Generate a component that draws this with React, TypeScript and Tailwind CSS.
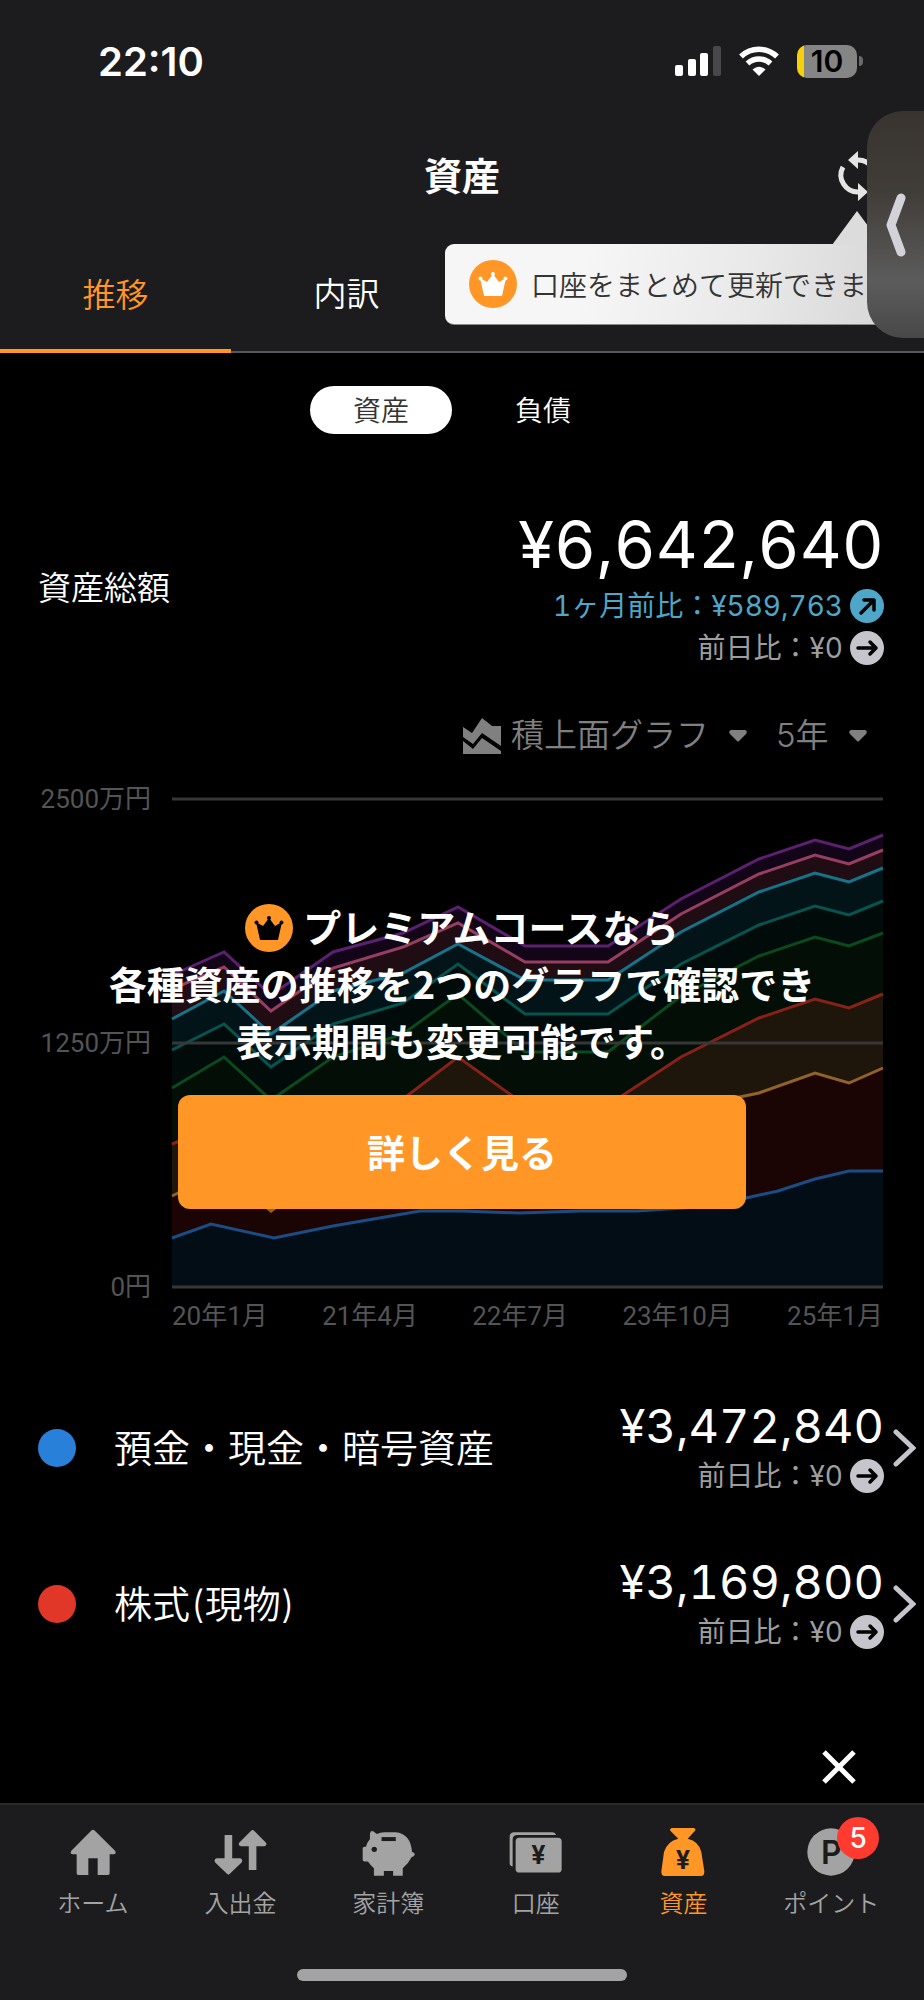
import type { ReactNode } from "react";

const PLOT_WIDTH = 711;
const PLOT_HEIGHT = 488;

const XS = [0, 52, 99, 161, 231, 286, 353, 436, 509, 587, 643, 677, 711];

type Series = { name: string; line: string; fill: string; xs: number[]; ys: number[] };

// drawn back to front, each area covers the one above it down to the baseline
const SERIES: Series[] = [
  { name: "purple", line: "#5c2070", fill: "#110517", xs: XS, ys: [176, 153, 196, 153, 134, 108, 147, 147, 100, 60, 41, 50, 36] },
  { name: "pink", line: "#963f60", fill: "#1f0d13", xs: XS, ys: [190, 168, 212, 169, 148, 124, 163, 163, 115, 75, 56, 65, 51] },
  { name: "cyan", line: "#16748a", fill: "#031419", xs: XS, ys: [220, 192, 235, 192, 174, 145, 181, 181, 133, 93, 74, 83, 69] },
  { name: "teal", line: "#06544d", fill: "#010b09", xs: XS, ys: [251, 225, 268, 225, 204, 165, 215, 215, 165, 126, 107, 116, 102] },
  { name: "green", line: "#0a4a1f", fill: "#030f06", xs: XS, ys: [289, 258, 301, 258, 235, 195, 253, 253, 197, 157, 138, 147, 134] },
  { name: "red", line: "#882218", fill: "#1e150b", xs: XS, ys: [345, 325, 360, 330, 300, 258, 306, 306, 258, 219, 200, 209, 195] },
  { name: "gold", line: "#926328", fill: "#1a0504", xs: XS, ys: [397, 372, 412, 365, 350, 330, 340, 340, 310, 294, 274, 284, 269] },
  {
    name: "blue",
    line: "#1a4d85",
    fill: "#030d16",
    xs: [0, 39, 102, 161, 248, 290, 347, 408, 465, 540, 574, 606, 643, 677, 711],
    ys: [439, 425, 439, 427, 412, 412, 414, 412, 412, 407, 399, 392, 380, 372, 372],
  },
];

const Y_LABELS = ["2500万円", "1250万円", "0円"];
const X_LABELS = ["20年1月", "21年4月", "22年7月", "23年10月", "25年1月"];

const ACCOUNTS = [
  { name: "預金・現金・暗号資産", amount: "¥3,472,840", diff: "¥0", dot: "bg-[#2980d9]" },
  { name: "株式(現物)", amount: "¥3,169,800", diff: "¥0", dot: "bg-[#e03728]" },
];

function Crown({ className }: { className: string }) {
  return (
    <svg viewBox="0 0 48 48" className="size-12 shrink-0" aria-hidden="true">
      <circle cx="24" cy="24" r="24" fill="#ff9626" />
      <g className={className}>
        <path d="M11 18l7 4 6-8 6 8 7-4-4 18H15z" />
        <circle cx="24" cy="14" r="2" />
        <circle cx="11.500" cy="18.500" r="2" />
        <circle cx="36.500" cy="18.500" r="2" />
      </g>
    </svg>
  );
}

function TrendIcon({ up = false }: { up?: boolean }) {
  return (
    <svg viewBox="0 0 34 34" className="size-[34px] shrink-0" aria-hidden="true">
      <circle cx="17" cy="17" r="17" fill={up ? "#4ea7c8" : "#c6c5cb"} />
      <g fill="none" stroke="#000" strokeWidth="3.500" strokeLinecap="round" strokeLinejoin="round">
        {up ? <path d="M11 24L24 11M14 11h10v10" /> : <path d="M8 17h18M20 11l6 6-6 6" />}
      </g>
    </svg>
  );
}

function Caret() {
  return (
    <svg viewBox="0 0 18 12" className="h-3 w-[18px]" aria-hidden="true">
      <path d="M2 0h14q3 1 1 4l-7 7q-1 1-2 0L1 4Q-1 1 2 0z" fill="#808080" />
    </svg>
  );
}

function StatusBar() {
  return (
    <div className="flex h-[122px] items-center justify-between pl-[98px] pr-[61px]">
      <span className="pt-[2px] text-[40px] font-semibold leading-none">22:10</span>
      <div className="flex items-center gap-[18px]">
        <svg viewBox="0 0 46 30" className="h-[30px] w-[46px]" fill="#fff" aria-hidden="true">
          <rect x="0" y="19" width="8" height="11" rx="2" />
          <rect x="13" y="13" width="8" height="17" rx="2" />
          <rect x="25" y="7" width="8" height="23" rx="2" />
          <rect x="38" y="0" width="8" height="30" rx="2" fill="#48484a" />
        </svg>
        <svg viewBox="0 0 40 30" className="h-[30px] w-10" aria-hidden="true">
          <g fill="none" stroke="#fff" strokeWidth="5.500">
            <path d="M2 10.500a26 26 0 0 1 36 0" />
            <path d="M8.500 17.500a17 17 0 0 1 23 0" />
          </g>
          <path d="M20 30l-6.500-6.500q6.500-5.500 13 0z" fill="#fff" />
        </svg>
        <div className="flex items-center gap-[2px]">
          <div className="flex h-[33px] w-[60px] items-center justify-center rounded-[10px] bg-[linear-gradient(90deg,#f5d00b_7px,#858585_7px)]">
            <span className="text-[30px] font-semibold leading-none text-black">10</span>
          </div>
          <span className="h-[10px] w-1 rounded-r-full bg-[#6a6a6a]" />
        </div>
      </div>
    </div>
  );
}

function UpdateTooltip() {
  return (
    <div className="absolute left-[445px] right-[12px] top-[244px] flex h-[81px] items-center gap-[14px] rounded-[9px] border-b border-[#8a8a8a] bg-[linear-gradient(100deg,#f6f6f6_30%,#e9e9e9_65%,#d4d4d4)] pl-6">
      <svg viewBox="0 0 50 34" className="absolute -top-[33px] right-[30px] h-[34px] w-[50px]" aria-hidden="true">
        <path d="M25 0l25 34H0z" fill="#dcdcdc" />
      </svg>
      <Crown className="fill-white" />
      <p className="whitespace-nowrap pt-1 text-[28px] font-[350] text-[#333]">口座をまとめて更新できます</p>
    </div>
  );
}

function Header() {
  return (
    <header className="relative bg-[#1c1c1e]">
      <StatusBar />
      <div className="flex h-[108px] items-center justify-center">
        <h1 className="text-[38px] font-bold leading-[54px]">資産</h1>
        <button type="button" aria-label="更新" className="absolute right-[39px]">
          <svg viewBox="0 0 54 54" className="size-[54px]" aria-hidden="true">
            <g fill="none" stroke="#e4e4e4" strokeWidth="5">
              <path d="M12 18a17 17 0 0 0 16 25" />
              <path d="M42 36a17 17 0 0 0-16-25" />
            </g>
            <path d="M27 34v18l10-9zM27 20V2l-10 9z" fill="#e4e4e4" />
          </svg>
        </button>
      </div>
      <nav className="grid h-[123px] grid-cols-4 border-b-2 border-[#57565b] text-[33px] font-[350]">
        <button type="button" className="-mb-[2px] border-b-4 border-[#ff9626] pt-3 text-[#ff9626]">推移</button>
        <button type="button" className="pt-2">内訳</button>
      </nav>
      <UpdateTooltip />
      <button
        type="button"
        aria-label="戻る"
        className="absolute right-0 top-[111px] flex h-[227px] w-[57px] items-center justify-center rounded-l-[36px] bg-[linear-gradient(#39342f,#403c38_35%,#5c5c5c_75%,#484848)]"
      >
        <svg viewBox="0 0 22 66" className="h-[66px] w-[22px]" aria-hidden="true">
          <path d="M16 6L6 33l10 27" fill="none" stroke="#d3d2d9" strokeWidth="9" strokeLinecap="round" strokeLinejoin="round" />
        </svg>
      </button>
    </header>
  );
}

function Summary() {
  return (
    <section className="mt-[71px] flex items-center justify-between pl-[38px] pr-10">
      <h2 className="pt-1 text-[33px] font-[350]">資産総額</h2>
      <div className="flex flex-col items-end tabular-nums">
        <p className="text-[65px] leading-[80px]">¥6,642,640</p>
        <p className="flex h-[42px] items-center gap-[7px] text-[28px] text-[#4ea7c8]">
          1ヶ月前比：¥589,763
          <TrendIcon up />
        </p>
        <p className="flex h-[42px] items-center gap-[7px] text-[28px] text-[#9e9e9e]">
          前日比：¥0
          <TrendIcon />
        </p>
      </div>
    </section>
  );
}

function ChartControls() {
  return (
    <div className="mt-[43px] flex h-12 items-center justify-end pr-[57px] text-[33px] font-[350] text-[#808080]">
      <svg viewBox="0 0 38 36" className="mr-[10px] h-9 w-[38px]" fill="#808080" aria-hidden="true">
        <path d="M0 9l9 6L19 0l10 8h9v20L19 15l-9 11L0 19z" />
        <path d="M0 23l10 8 9-11 19 13v3H0z" />
      </svg>
      <label className="flex items-center gap-[20px]">
        <select aria-label="グラフの種類" className="appearance-none">
          <option>積上面グラフ</option>
        </select>
        <Caret />
      </label>
      <label className="ml-[29px] flex items-center gap-[20px]">
        <select aria-label="表示期間" className="appearance-none">
          <option>5年</option>
        </select>
        <Caret />
      </label>
    </div>
  );
}

function AssetChart() {
  return (
    <section className="relative mt-[26px] pr-[41px] font-['Roboto','Noto_Sans_CJK_JP',sans-serif] text-[26px] text-[#545454]">
      <div className="flex">
        <div className="flex w-[172px] shrink-0 flex-col items-end justify-between pr-[21px] leading-[26px]">
          {Y_LABELS.map((label) => (
            <span key={label}>{label}</span>
          ))}
        </div>
        <div className="flex-1 py-[13px]">
          <svg viewBox={`0 0 ${PLOT_WIDTH} ${PLOT_HEIGHT}`} className="block w-full overflow-visible" role="img" aria-label="資産推移">
            {SERIES.map((s) => {
              const points = s.xs.map((x, i) => `${x},${s.ys[i]}`).join(" ");
              return (
                <g key={s.name}>
                  <polygon points={`${points} ${PLOT_WIDTH},${PLOT_HEIGHT} 0,${PLOT_HEIGHT}`} fill={s.fill} />
                  <polyline points={points} fill="none" stroke={s.line} strokeWidth="3" />
                </g>
              );
            })}
            <path d="M0 0H711M0 244H711M0 488H711" stroke="#373737" strokeWidth="3" />
          </svg>
        </div>
      </div>
      <div className="flex h-8 items-center justify-between pl-[172px]">
        {X_LABELS.map((label) => (
          <span key={label}>{label}</span>
        ))}
      </div>

      {/* Premium upsell over the sample chart */}
      <div className="absolute inset-0 flex flex-col items-center pt-[111px] font-['Noto_Sans_CJK_JP',sans-serif] text-[38px] font-bold leading-[57px] text-white">
        <div className="flex gap-[10px]">
          <div className="pt-[7px]">
            <Crown className="fill-black" />
          </div>
          <p>プレミアムコースなら</p>
        </div>
        <p>各種資産の推移を2つのグラフで確認でき</p>
        <p>表示期間も変更可能です。</p>
        <button type="button" className="mt-[27px] h-[114px] w-[568px] rounded-xl bg-[#ff9626] pb-1">
          詳しく見る
        </button>
      </div>
    </section>
  );
}

function AccountList() {
  return (
    <ul className="mt-[38px] tabular-nums">
      {ACCOUNTS.map((account) => (
        <li key={account.name}>
          <a href="#" className="flex h-[156px] items-center pl-[38px] pr-2">
            <span className={`size-[38px] rounded-full ${account.dot}`} />
            <span className="ml-[38px] flex-1 text-[38px] font-[350]">{account.name}</span>
            <span className="flex flex-col items-end">
              <span className="text-[47px] leading-[56px]">{account.amount}</span>
              <span className="flex h-11 items-center gap-[7px] text-[28px] text-[#9e9e9e]">
                前日比：{account.diff}
                <TrendIcon />
              </span>
            </span>
            <svg viewBox="0 0 24 40" className="ml-2 h-10 w-6" aria-hidden="true">
              <path d="M4 4l17 16L4 36" fill="none" stroke="#c6c5cb" strokeWidth="5" strokeLinecap="round" />
            </svg>
          </a>
        </li>
      ))}
    </ul>
  );
}

function NavItem({ label, active = false, children }: { label: string; active?: boolean; children: ReactNode }) {
  return (
    <a href="#" className={`flex flex-col items-center gap-[10px] ${active ? "text-[#ff9626]" : "text-[#a3a3a3]"}`}>
      <span className="relative h-12">{children}</span>
      <span className="text-2xl font-[350] leading-9">{label}</span>
    </a>
  );
}

function BottomNav() {
  return (
    <footer className="mt-auto border-t-2 border-[#29292a] bg-[#1c1c1e]">
      <nav className="grid grid-cols-6 px-[19px] pt-[23px]">
        <NavItem label="ホーム">
          <svg viewBox="205 324 144 144" className="size-12 fill-current" aria-hidden="true">
            <path d="M273 331q4-4 8 0l62 61q6 10-5 11h-11v57q0 5-5 5h-31v-50h-28v50h-30q-5 0-5-5v-57h-11q-11-1-5-11z" />
          </svg>
        </NavItem>
        <NavItem label="入出金">
          <svg viewBox="640 324 160 144" className="h-12 w-[53px] fill-current" aria-hidden="true">
            <path d="M672 345h23v70h24q9 2 5 12l-36 35q-4 5-9 0l-36-35q-4-10 5-12h24z" />
            <path d="M745 450h23v-71h24q9-2 5-11l-36-36q-4-5-9 0l-36 36q-4 9 5 11h24z" />
          </svg>
        </NavItem>
        <NavItem label="家計簿">
          <svg viewBox="1083 324 160 144" className="h-12 w-[53px] fill-current" aria-hidden="true">
            <path d="M1107 340q2-10 11-6l10 8q10-6 22-6h34q46 4 50 60 9 2 8 8-1 6-9 7-9 19-27 34v23h-29v-15h-28v15h-30v-23q-11-9-18-20h-10q-6 0-6-6v-34q0-5 6-5h4q3-12 12-23z" />
            <path d="M1142 351h43v12h-43z" fill="#1c1c1e" />
            <circle cx="1120" cy="388" r="8" fill="#1c1c1e" />
          </svg>
        </NavItem>
        <NavItem label="口座">
          <svg viewBox="140 324 160 144" className="h-12 w-[53px] fill-current" aria-hidden="true">
            <path d="M142 350q0-14 14-14h114q10 0 12 9H165q-14 0-14 14v81q-9-2-9-10z" />
            <rect x="160" y="353" width="139" height="105" rx="11" />
            <text x="229" y="433" textAnchor="middle" fontSize="76" fontWeight="700" fill="#1c1c1e">¥</text>
          </svg>
        </NavItem>
        <NavItem label="資産" active>
          <svg viewBox="592 324 144 144" className="size-12 fill-current" aria-hidden="true">
            <path d="M631 324h65q8 2 4 8l-22 24q34 8 41 40l9 58q1 14-10 14H609q-11 0-10-14l8-58q9-32 43-40l-24-24q-3-6 5-8z" />
            <text x="664" y="446" textAnchor="middle" fontSize="76" fontWeight="700" fill="#1c1c1e">¥</text>
          </svg>
        </NavItem>
        <NavItem label="ポイント">
          <svg viewBox="1033 325 144 144" className="size-12 fill-current" aria-hidden="true">
            <circle cx="1105" cy="397" r="71" />
            <text x="1075" y="432" fontSize="96" fontWeight="600" fill="#1c1c1e">P</text>
          </svg>
          <span className="absolute -top-[11px] left-[30px] flex size-[42px] items-center justify-center rounded-full bg-[#ff3b30] text-[28px] font-medium leading-none text-white">
            5
          </span>
        </NavItem>
      </nav>
      <div className="mx-auto mb-[19px] mt-[47px] h-3 w-[330px] rounded-full bg-[#a3a3a3]" />
    </footer>
  );
}

export default function App() {
  return (
    <div className="flex min-h-screen flex-col overflow-x-hidden bg-black font-['Inter','Noto_Sans_CJK_JP',sans-serif] text-white">
      <Header />
      <main>
        <div className="mt-[33px] flex justify-center gap-5 text-[28px] font-[350]">
          <button type="button" className="h-12 w-[142px] rounded-full bg-white pt-[2px] text-[#333]">資産</button>
          <button type="button" className="h-12 w-[142px] rounded-full pt-[2px]">負債</button>
        </div>
        <Summary />
        <ChartControls />
        <AssetChart />
        <AccountList />
        <div className="mb-3 mt-[61px] flex justify-end pr-[61px]">
          <button type="button" aria-label="閉じる" className="flex size-12 items-center justify-center">
            <svg viewBox="0 0 34 34" className="size-[34px]" aria-hidden="true">
              <path d="M2 2l30 30M32 2L2 32" stroke="#fff" strokeWidth="5" />
            </svg>
          </button>
        </div>
      </main>
      <BottomNav />
    </div>
  );
}
